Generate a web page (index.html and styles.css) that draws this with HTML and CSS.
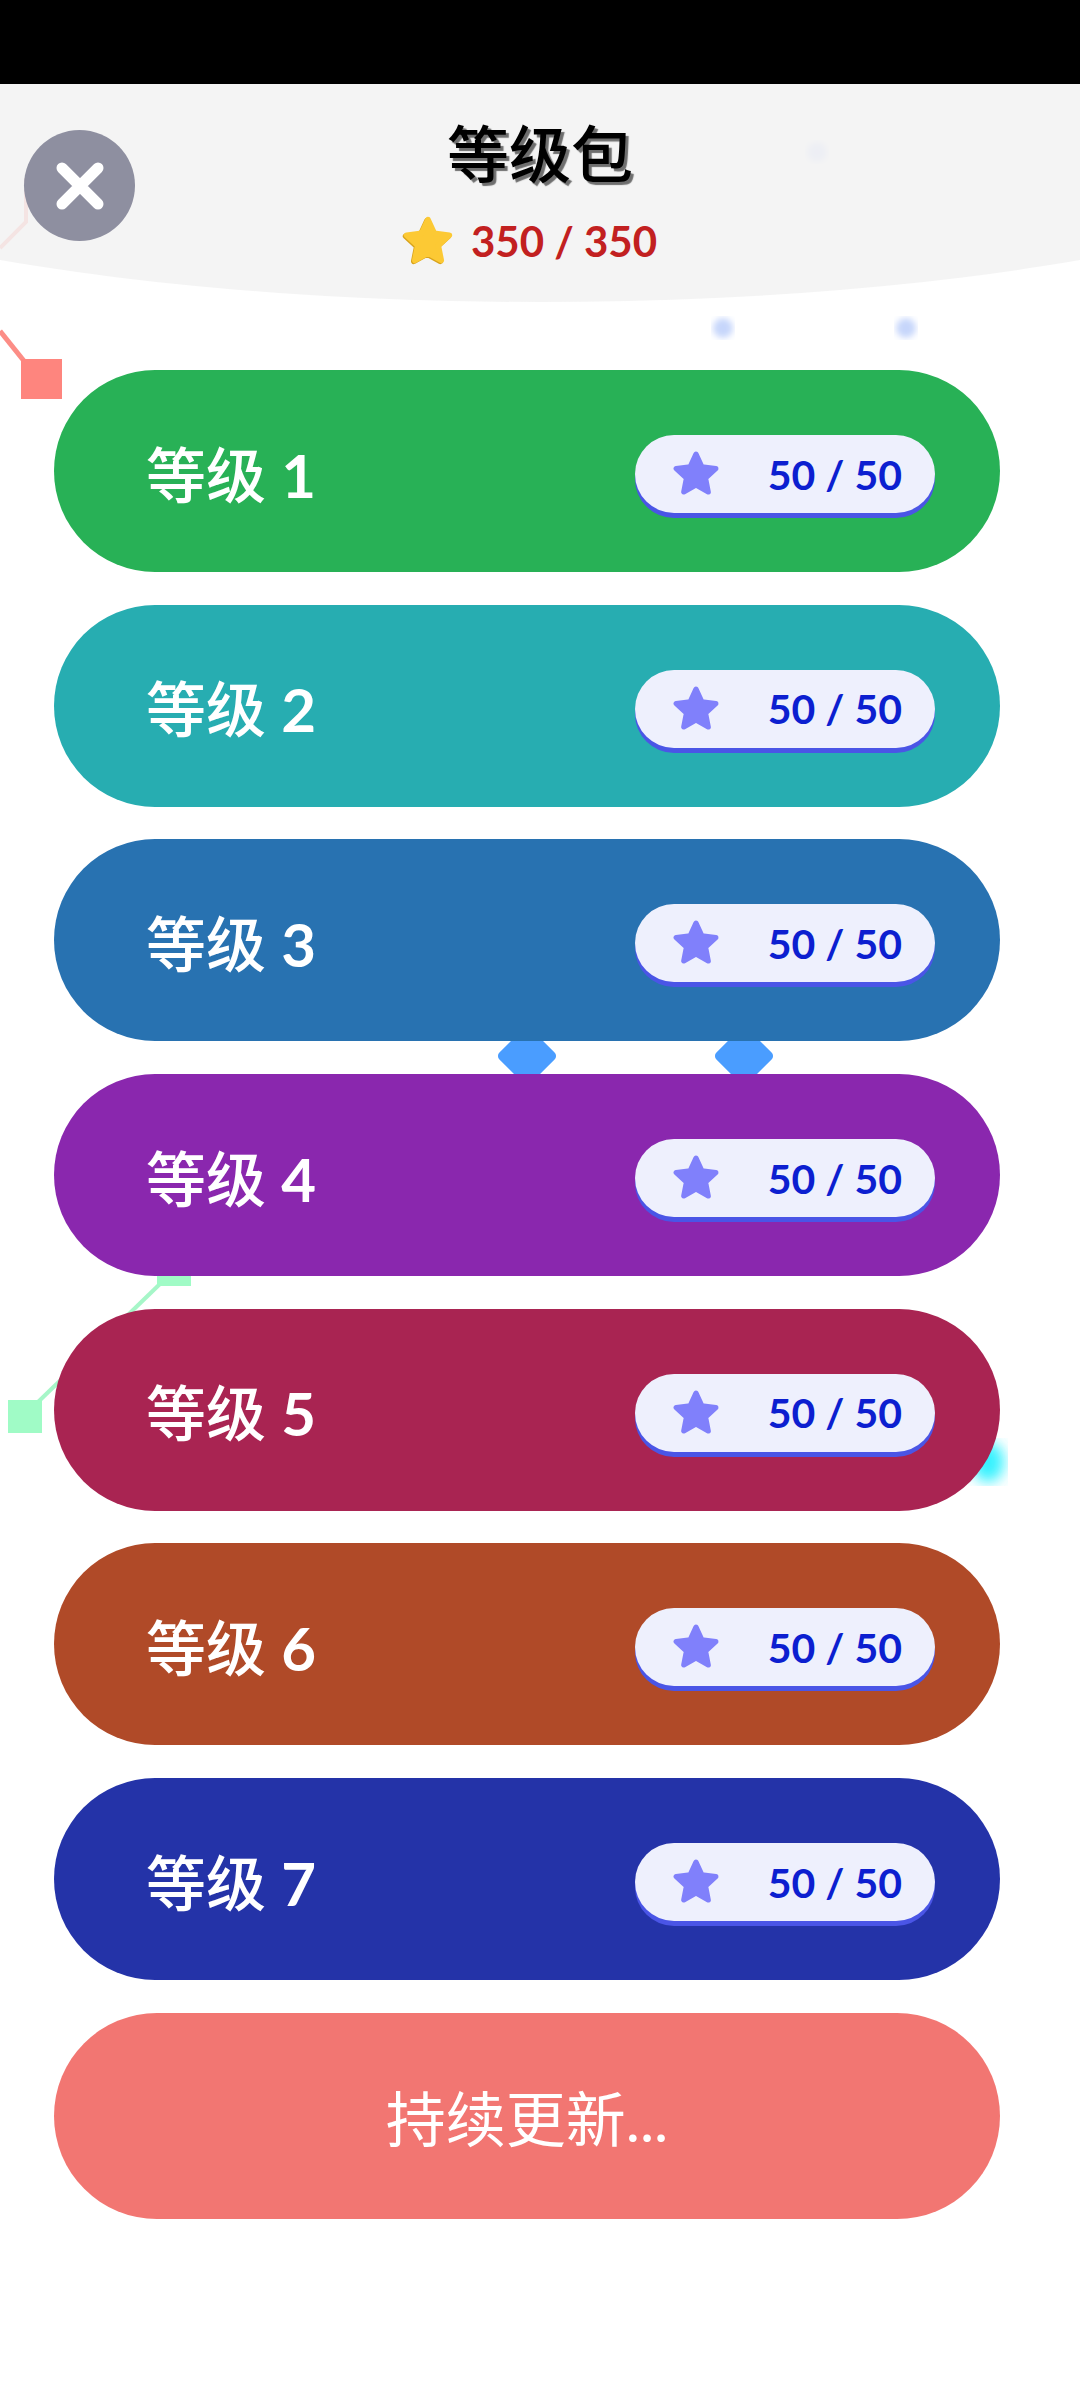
FILE: index.html
```html
<!DOCTYPE html>
<html lang="zh-CN">
<head>
    <meta charset="UTF-8">
    <meta name="viewport" content="width=device-width, initial-scale=1.0">
    <title>等级包</title>
    <link rel="stylesheet" href="styles.css">
</head>
<body>
    <div class="page">
        <div class="status-bar"></div>

        <!-- background decoration behind the cards -->
        <svg class="decor" width="1080" height="2400" viewBox="0 0 1080 2400">
            <defs>
                <filter id="soft"><feGaussianBlur stdDeviation="3"/></filter>
                <filter id="glow"><feGaussianBlur stdDeviation="7"/></filter>
            </defs>
            <polyline points="0,248 26,222 26,178" fill="none" stroke="#fc8d86" stroke-width="4"/>
            <line x1="0" y1="331" x2="24" y2="361" stroke="#fc8d86" stroke-width="5"/>
            <rect x="21" y="359" width="41" height="40" fill="#fe857e"/>

            <rect x="505" y="1034" width="44" height="44" rx="5" fill="#4a9dff" transform="rotate(45 527 1056)"/>
            <rect x="722" y="1034" width="44" height="44" rx="5" fill="#4a9dff" transform="rotate(45 744 1056)"/>

            <line x1="38" y1="1402" x2="162" y2="1282" stroke="#a6f6c8" stroke-width="4"/>
            <rect x="157" y="1253" width="34" height="33" fill="#a0fbc6"/>
            <rect x="8" y="1400" width="34" height="33" fill="#a0fbc6"/>

            <circle cx="817" cy="152" r="10" fill="#c9d6fb" filter="url(#soft)"/>
            <circle cx="723" cy="328" r="10" fill="#c6d6fb" filter="url(#soft)"/>
            <circle cx="906" cy="328" r="10" fill="#c6d6fb" filter="url(#soft)"/>
            <ellipse cx="988" cy="1462" rx="16" ry="20" fill="#36f2ff" filter="url(#glow)"/>
        </svg>

        <header class="top">
            <button class="close" aria-label="关闭">
                <svg width="48" height="48" viewBox="0 0 48 48">
                    <path d="M6 6 L42 42 M42 6 L6 42" stroke="#fff" stroke-width="11" stroke-linecap="round"/>
                </svg>
            </button>
            <h1 class="title">等级包</h1>
            <div class="total">
                <svg class="star star-gold" width="54" height="54" viewBox="0 0 24 24">
                    <polygon points="12,2.5 14.82,8.62 21.51,9.41 16.57,13.98 17.88,20.59 12,17.3 6.12,20.59 7.43,13.98 2.49,9.41 9.18,8.62"/>
                </svg>
                <span>350 / 350</span>
            </div>
        </header>

        <main class="levels">
            <div class="level level-1">
                <span class="level-name">等级 <b>1</b></span>
                <span class="badge">
                    <svg class="star" width="50" height="50" viewBox="0 0 24 24"><polygon points="12,2.5 14.82,8.62 21.51,9.41 16.57,13.98 17.88,20.59 12,17.3 6.12,20.59 7.43,13.98 2.49,9.41 9.18,8.62"/></svg>
                    <span class="badge-count">50 / 50</span>
                </span>
            </div>
            <div class="level level-2">
                <span class="level-name">等级 <b>2</b></span>
                <span class="badge">
                    <svg class="star" width="50" height="50" viewBox="0 0 24 24"><polygon points="12,2.5 14.82,8.62 21.51,9.41 16.57,13.98 17.88,20.59 12,17.3 6.12,20.59 7.43,13.98 2.49,9.41 9.18,8.62"/></svg>
                    <span class="badge-count">50 / 50</span>
                </span>
            </div>
            <div class="level level-3">
                <span class="level-name">等级 <b>3</b></span>
                <span class="badge">
                    <svg class="star" width="50" height="50" viewBox="0 0 24 24"><polygon points="12,2.5 14.82,8.62 21.51,9.41 16.57,13.98 17.88,20.59 12,17.3 6.12,20.59 7.43,13.98 2.49,9.41 9.18,8.62"/></svg>
                    <span class="badge-count">50 / 50</span>
                </span>
            </div>
            <div class="level level-4">
                <span class="level-name">等级 <b>4</b></span>
                <span class="badge">
                    <svg class="star" width="50" height="50" viewBox="0 0 24 24"><polygon points="12,2.5 14.82,8.62 21.51,9.41 16.57,13.98 17.88,20.59 12,17.3 6.12,20.59 7.43,13.98 2.49,9.41 9.18,8.62"/></svg>
                    <span class="badge-count">50 / 50</span>
                </span>
            </div>
            <div class="level level-5">
                <span class="level-name">等级 <b>5</b></span>
                <span class="badge">
                    <svg class="star" width="50" height="50" viewBox="0 0 24 24"><polygon points="12,2.5 14.82,8.62 21.51,9.41 16.57,13.98 17.88,20.59 12,17.3 6.12,20.59 7.43,13.98 2.49,9.41 9.18,8.62"/></svg>
                    <span class="badge-count">50 / 50</span>
                </span>
            </div>
            <div class="level level-6">
                <span class="level-name">等级 <b>6</b></span>
                <span class="badge">
                    <svg class="star" width="50" height="50" viewBox="0 0 24 24"><polygon points="12,2.5 14.82,8.62 21.51,9.41 16.57,13.98 17.88,20.59 12,17.3 6.12,20.59 7.43,13.98 2.49,9.41 9.18,8.62"/></svg>
                    <span class="badge-count">50 / 50</span>
                </span>
            </div>
            <div class="level level-7">
                <span class="level-name">等级 <b>7</b></span>
                <span class="badge">
                    <svg class="star" width="50" height="50" viewBox="0 0 24 24"><polygon points="12,2.5 14.82,8.62 21.51,9.41 16.57,13.98 17.88,20.59 12,17.3 6.12,20.59 7.43,13.98 2.49,9.41 9.18,8.62"/></svg>
                    <span class="badge-count">50 / 50</span>
                </span>
            </div>
            <div class="more">持续更新...</div>
        </main>
    </div>
</body>
</html>
```

FILE: styles.css
```css
body {
    margin: 0;
    background-color: #fff;
    font-family: Lato, "Noto Sans CJK SC", sans-serif;
}
.page {
    position: relative;
    width: 1080px;
    min-height: 2400px;
    overflow: hidden;
}
.status-bar {
    position: relative;
    z-index: 2;
    height: 84px;
    background-color: #000;
}
.decor {
    position: absolute;
    top: 0;
    left: 0;
}

/* header */
.top {
    position: relative;
    z-index: 1;
    padding-top: 33px;
    display: flex;
    flex-direction: column;
    align-items: center;
}
.top::before {
    content: "";
    position: absolute;
    z-index: -1;
    top: -202px;
    left: 50%;
    width: 1800px;
    height: 420px;
    margin-left: -900px;
    border-radius: 50%;
    background-color: rgba(242, 242, 242, 0.86);
}
.close {
    position: absolute;
    top: 46px;
    left: 24px;
    width: 111px;
    height: 111px;
    padding: 0;
    border: none;
    border-radius: 50%;
    background-color: #8e8fa0;
    display: flex;
    align-items: center;
    justify-content: center;
}
.title {
    margin: 0;
    font-size: 62px;
    line-height: 74px;
    font-weight: 500;
    color: #000;
    text-shadow: 3px 3px 1px rgba(0, 0, 0, 0.55);
}
.total {
    margin-top: 25px;
    margin-left: -22px;
    height: 50px;
    display: flex;
    align-items: center;
    gap: 16px;
    font-size: 42px;
    font-weight: 700;
    color: #c22020;
}
.star polygon {
    fill: #8080fb;
    stroke: #8080fb;
    stroke-width: 2.5;
    stroke-linejoin: round;
}
.star-gold {
    filter: drop-shadow(-1px 1px 0 #d8a31c);
}
.star-gold polygon {
    fill: #fcc934;
    stroke: #fcc934;
}

/* level list */
.levels {
    position: relative;
    z-index: 1;
    margin-top: 104px;
    padding: 0 80px 0 54px;
    display: flex;
    flex-direction: column;
    gap: 32.7px;
}
.level {
    height: 202px;
    border-radius: 101px;
    padding: 0 65px 0 92px;
    display: flex;
    align-items: center;
    justify-content: space-between;
}
.level-name {
    font-size: 60px;
    font-weight: 500;
    color: #fff;
}
.level-name b {
    font-weight: 700;
}
.badge {
    width: 300px;
    height: 78px;
    margin-top: 6px;
    box-sizing: border-box;
    padding: 0 33px 0 36px;
    border-radius: 39px;
    background-color: #eef0fd;
    box-shadow: 0 5px 0 #4a55e6;
    display: flex;
    align-items: center;
    justify-content: space-between;
}
.badge-count {
    font-size: 41px;
    font-weight: 700;
    color: #0c1fd0;
}
.level-1 { background-color: #28b156; }
.level-2 { background-color: #27adb1; }
.level-3 { background-color: #2872b1; }
.level-4 { background-color: #8a27ae; }
.level-5 { background-color: #a92452; }
.level-6 { background-color: #b04a28; }
.level-7 { background-color: #2433a8; }
.more {
    height: 206px;
    border-radius: 103px;
    background-color: #f27672;
    display: flex;
    align-items: center;
    justify-content: center;
    font-size: 60px;
    color: #fff;
}
```
